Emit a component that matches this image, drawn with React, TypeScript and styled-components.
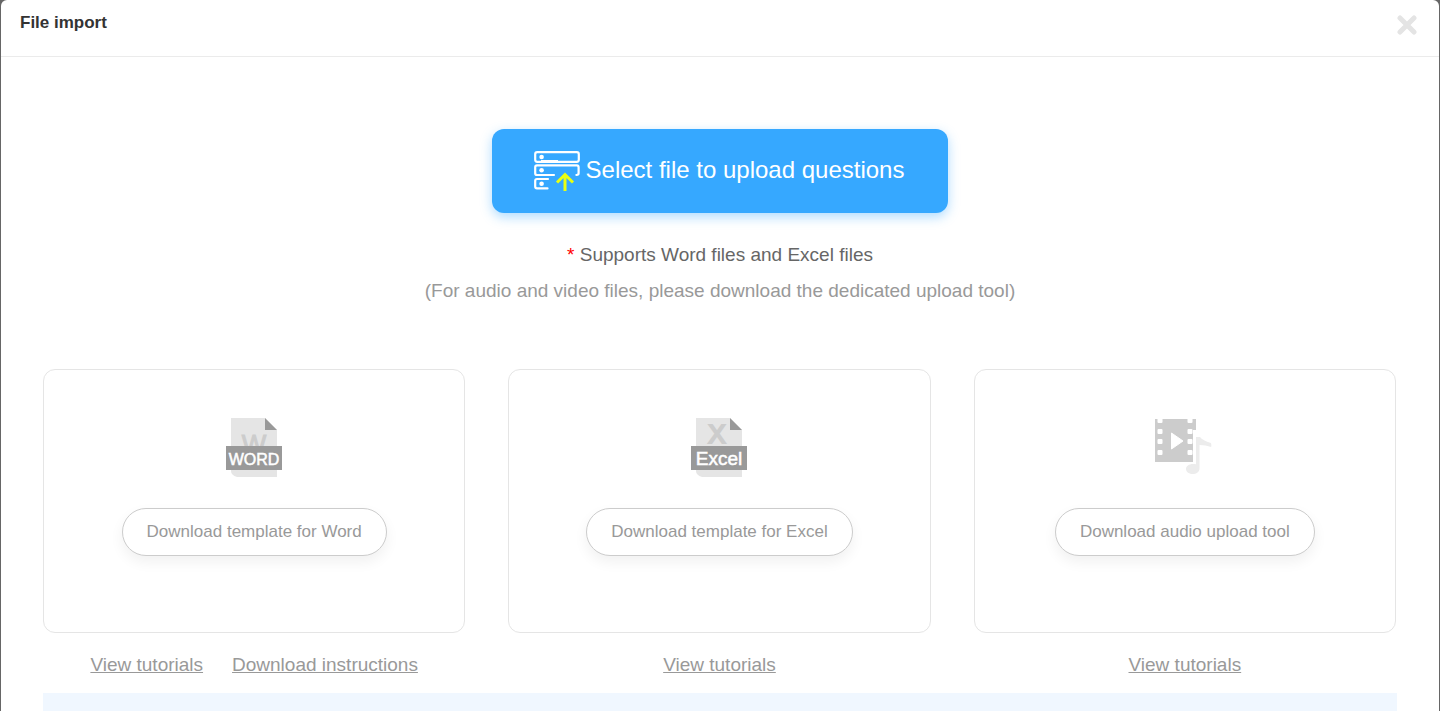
import React from "react";
import styled, { createGlobalStyle } from "styled-components";

const GlobalStyle = createGlobalStyle`
  *, *::before, *::after { box-sizing: border-box; }
  html, body { margin: 0; background: #666; }
  body { font-family: "Liberation Sans", Arial, sans-serif; color: #333; }
`;

const Dialog = styled.section`
  display: flex;
  flex-direction: column;
  min-height: 100vh;
  margin: 0 1px;
  background: #fff;
  border-radius: 6px 6px 0 0;
`;

const Header = styled.header`
  display: flex;
  align-items: flex-start;
  justify-content: space-between;
  height: 57px;
  padding: 12px 19px;
  border-bottom: 1px solid #ebebeb;
`;

const Title = styled.h1`
  margin: 0;
  font-size: 17px;
  line-height: 22px;
  font-weight: 700;
`;

const CloseButton = styled.button`
  display: flex;
  padding: 3px;
  border: 0;
  background: none;
  cursor: pointer;
`;

const Body = styled.main`
  display: flex;
  flex: 1;
  flex-direction: column;
  padding: 72px 42px 0;
`;

const UploadButton = styled.button`
  display: flex;
  align-items: center;
  align-self: center;
  gap: 6px;
  height: 84px;
  padding: 0 44px 2px 42px;
  border: 0;
  border-radius: 12px;
  background: #36a8ff;
  box-shadow: 0 4px 12px rgba(54, 168, 255, 0.4);
  color: #fff;
  font-family: inherit;
  font-size: 24px;
  line-height: 28px;
  cursor: pointer;
`;

const Notes = styled.div`
  margin: 24px 0 60px;
  text-align: center;
`;

const Note = styled.p<{ $muted?: boolean }>`
  margin: 0;
  color: ${(p) => (p.$muted ? "#999" : "#666")};
  font-size: 19px;
  line-height: 36px;
`;

const Asterisk = styled.span`
  color: #f00;
`;

const Grid = styled.div`
  display: grid;
  grid-template-columns: repeat(3, 1fr);
  gap: 43px;
  padding-right: 1px;
`;

const Card = styled.div`
  display: flex;
  flex-direction: column;
  align-items: center;
  gap: 28px;
  height: 264px;
  padding-top: 46px;
  border: 1px solid #e5e5e5;
  border-radius: 12px;
`;

const PillButton = styled.button`
  height: 48px;
  padding: 0 24px 1px;
  border: 1px solid #ccc;
  border-radius: 24px;
  background: #fff;
  box-shadow: 0 6px 14px rgba(0, 0, 0, 0.06);
  color: #999;
  font-family: inherit;
  font-size: 17px;
  cursor: pointer;
`;

const Links = styled.nav`
  display: flex;
  justify-content: center;
  gap: 29px;
  padding: 20px 0 16px;
`;

const TextLink = styled.a`
  color: #999;
  font-size: 19px;
  line-height: 24px;
  text-decoration: underline;
`;

const InfoPanel = styled.div`
  flex: 1;
  min-height: 18px;
  background: #f0f7ff;
`;

const IconText = styled.text`
  font-family: "Liberation Sans", Arial, sans-serif;
`;

const CloseIcon = () => (
  <svg width="20" height="20" viewBox="0 0 20 20" aria-hidden="true">
    <path d="M3 3l14 14M17 3L3 17" stroke="#e4e4e4" strokeWidth="5" strokeLinecap="round" />
  </svg>
);

const UploadIcon = () => (
  <svg width="46" height="42" viewBox="0 -2 46 42" fill="none" aria-hidden="true">
    <g stroke="#fff" strokeWidth="2.2" strokeLinecap="round" strokeLinejoin="round">
      <rect x="1.2" y="1.2" width="43.6" height="9.6" rx="2" />
      <path d="M20 24H3q-1.800 0-1.800-1.800v-6q0-1.800 1.800-1.800h39.800q1.800 0 1.800 1.800v6q0 1.600-2.200 1.800" />
      <path d="M14 28H3q-1.800 0-1.800 1.800v5.800q0 1.800 1.800 1.800h10.500" />
    </g>
    <g fill="#fff">
      <circle cx="7.600" cy="6" r="2.300" />
      <circle cx="7.600" cy="19.200" r="2.300" />
      <circle cx="7.600" cy="32.700" r="2.300" />
      <path d="M7 9h17v1H7z" />
    </g>
    <path d="M23 31.500l8-8 8 8M31 24v16" stroke="#eaff10" strokeWidth="3" />
  </svg>
);

type DocIconProps = {
  letter: string;
  letterX: number;
  letterY: number;
  letterStroke: number;
  label: string;
  labelSize: number;
};

const DocumentIcon = ({
  letter,
  letterX,
  letterY,
  letterStroke,
  label,
  labelSize,
}: DocIconProps) => (
  <svg width="56" height="64" viewBox="0 0 56 64" aria-hidden="true">
    <path d="M5 2h34l12 12v47H11q-6-2-6-6z" fill="#e5e5e5" />
    <path d="M39 2l12 12H39z" fill="#999" />
    <IconText
      x={letterX}
      y={letterY}
      fontSize="26"
      fill="#ccc"
      stroke="#ccc"
      strokeWidth={letterStroke}
      textAnchor="middle"
    >
      {letter}
    </IconText>
    <rect y="30" width="56" height="24" fill="#999" />
    <IconText
      x="28"
      y="49"
      fontSize={labelSize}
      fill="#fff"
      stroke="#fff"
      strokeWidth="0.5"
      textAnchor="middle"
    >
      {label}
    </IconText>
  </svg>
);

const MediaIcon = () => (
  <svg width="60" height="64" viewBox="0 0 60 64" aria-hidden="true">
    <path d="M0 3h41v11h-3v32H0z" fill="#ccc" />
    <g fill="#fff">
      {[2, 13, 23, 34].map((y) => (
        <React.Fragment key={y}>
          <rect x="2.500" y={y} width="5" height="5" rx="1" />
          <rect x="32.500" y={y} width="5" height="5" rx="1" />
        </React.Fragment>
      ))}
      <path d="M16.500 17L28 25 16.500 33z" stroke="#fff" strokeLinejoin="round" />
    </g>
    <path
      d="M41 21h4q2.500 3.500 11 6 .8 2.500.2 4-5.500-2-11.700-2v23.500c0 3.500-3 5.500-7 5.500s-6.500-2.500-6.500-5c0-3.500 4-6 10-4.800z"
      fill="#ececec"
    />
  </svg>
);

const options = [
  {
    icon: (
      <DocumentIcon
        letter="W"
        letterX={28}
        letterY={37}
        letterStroke={1}
        label="WORD"
        labelSize={16}
      />
    ),
    action: "Download template for Word",
    links: ["View tutorials", "Download instructions"],
  },
  {
    icon: (
      <DocumentIcon
        letter="X"
        letterX={26}
        letterY={27}
        letterStroke={2}
        label="Excel"
        labelSize={19}
      />
    ),
    action: "Download template for Excel",
    links: ["View tutorials"],
  },
  {
    icon: <MediaIcon />,
    action: "Download audio upload tool",
    links: ["View tutorials"],
  },
];

export default function App() {
  return (
    <>
      <GlobalStyle />
      <Dialog role="dialog" aria-labelledby="import-title">
        <Header>
          <Title id="import-title">File import</Title>
          <CloseButton type="button" aria-label="Close">
            <CloseIcon />
          </CloseButton>
        </Header>
        <Body>
          <UploadButton type="button">
            <UploadIcon />
            Select file to upload questions
          </UploadButton>
          <Notes>
            <Note>
              <Asterisk>*</Asterisk> Supports Word files and Excel files
            </Note>
            <Note $muted>(For audio and video files, please download the dedicated upload tool)</Note>
          </Notes>
          <Grid>
            {options.map((option) => (
              <div key={option.action}>
                <Card>
                  {option.icon}
                  <PillButton type="button">{option.action}</PillButton>
                </Card>
                <Links>
                  {option.links.map((link) => (
                    <TextLink key={link} href="#">
                      {link}
                    </TextLink>
                  ))}
                </Links>
              </div>
            ))}
          </Grid>
          <InfoPanel />
        </Body>
      </Dialog>
    </>
  );
}
